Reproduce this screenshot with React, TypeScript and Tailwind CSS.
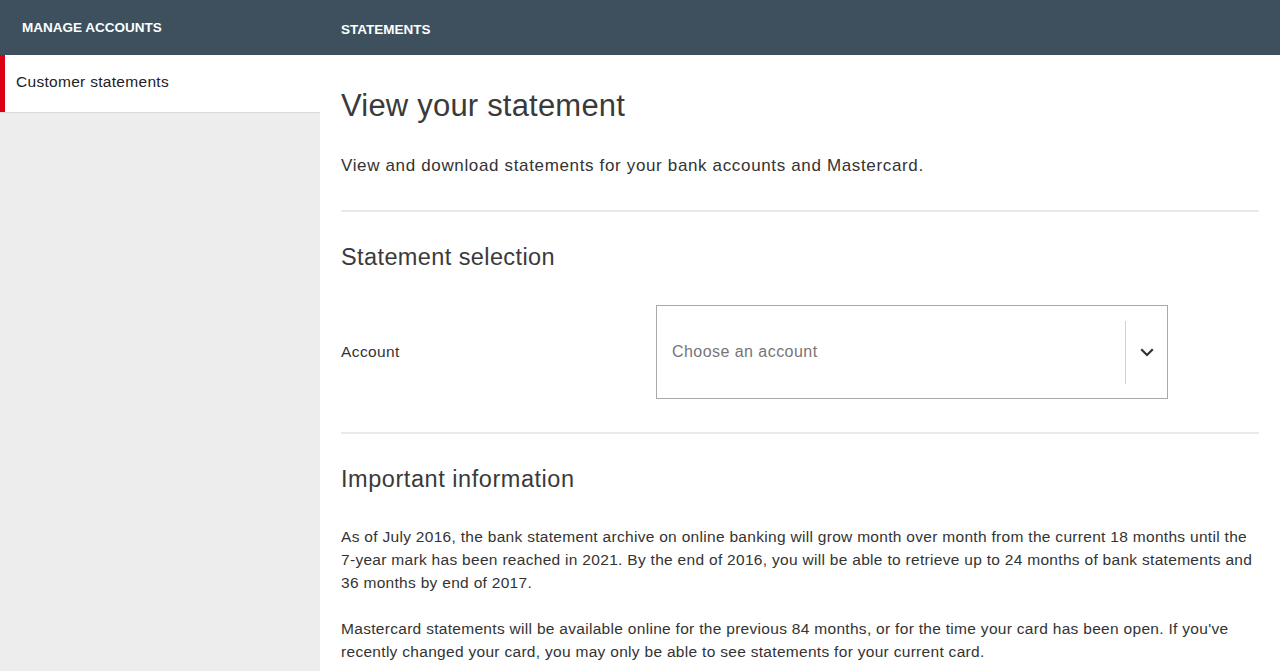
import React from "react";

const font = { fontFamily: "'Liberation Sans', Arial, sans-serif" };

function Chevron() {
  return (
    <svg width="14" height="9" viewBox="0 0 14 9" fill="none">
      <path d="M2 2l5 5 5-5" stroke="#333" strokeWidth="2.2" strokeLinecap="square" />
    </svg>
  );
}

export default function App() {
  return (
    <div className="min-h-[671px] flex flex-col bg-white text-[#333]" style={font}>
      {/* top bar */}
      <div className="flex h-[55px] bg-[#3e505d] text-white font-bold uppercase text-[13.5px]">
        <div className="w-[320px] pl-[22px] pt-[18px]">Manage accounts</div>
        <div className="flex-1 pl-[21px] pt-[20px]">Statements</div>
      </div>

      <div className="flex flex-1">
        {/* side nav */}
        <aside className="w-[320px] flex flex-col">
          <div className="h-[57px] border-l-[5px] border-[#db0011] pl-[11px] pt-[15px] text-[15.5px] tracking-[0.3px] text-[#222]">
            Customer statements
          </div>
          <div className="flex-1 bg-[#ededed] border-t border-[#d9d9d9]" />
        </aside>

        {/* main */}
        <main className="flex-1 pl-[21px] pr-[21px] pt-[33px]">
          <h1 className="text-[31px] leading-[36px] tracking-[0.2px] text-[#3a3a3a]">View your statement</h1>
          <p className="mt-[30px] text-[17px] leading-[24px] tracking-[0.65px]">
            View and download statements for your bank accounts and Mastercard.
          </p>
          <div className="mt-[32px] border-t-2 border-[#e9e9e9]" />

          <h2 className="mt-[30px] text-[23.5px] leading-[30px] tracking-[0.4px] text-[#3a3a3a]">Statement selection</h2>
          <div className="mt-[33px] flex items-center">
            <div className="w-[315px] text-[15.5px] tracking-[0.4px]">Account</div>
            <div className="w-[512px] h-[94px] border border-[#a9a9a9] flex items-center">
              <div className="flex-1 pl-[15px] text-[16px] tracking-[0.45px] text-[#767676]">Choose an account</div>
              <div className="h-[63px] border-l border-[#d0d0d0] w-[42px] flex items-center justify-center">
                <Chevron />
              </div>
            </div>
          </div>
          <div className="mt-[33px] border-t-2 border-[#e9e9e9]" />

          <h2 className="mt-[30px] text-[23.5px] leading-[30px] tracking-[0.55px] text-[#3a3a3a]">Important information</h2>
          <p className="mt-[31px] text-[15.5px] leading-[23px] tracking-[0.3px]">
            As of July 2016, the bank statement archive on online banking will grow month over month from the current 18 months until the 7-year mark has been reached in 2021. By the end of 2016, you will be able to retrieve up to 24 months of bank statements and 36 months by end of 2017.
          </p>
          <p className="mt-[23px] text-[15.5px] leading-[23px] tracking-[0.3px]">
            Mastercard statements will be available online for the previous 84 months, or for the time your card has been open. If you've recently changed your card, you may only be able to see statements for your current card.
          </p>
        </main>
      </div>
    </div>
  );
}
